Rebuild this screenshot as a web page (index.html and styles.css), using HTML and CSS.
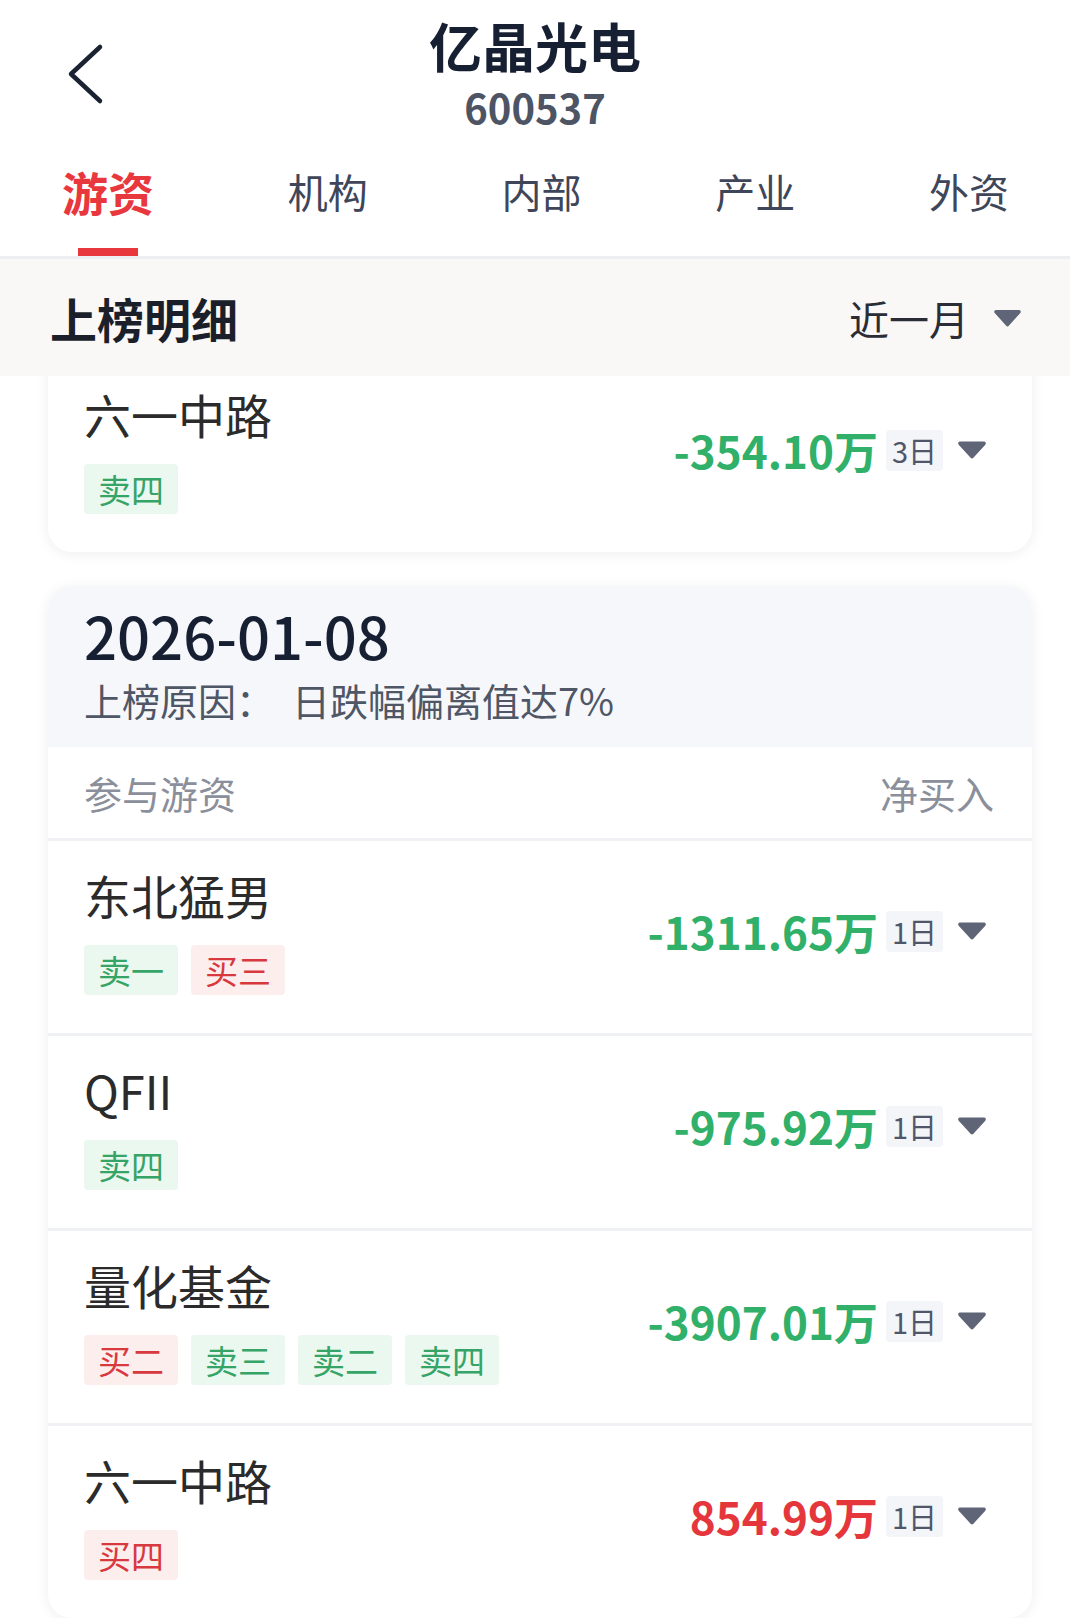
FILE: index.html
```html
<!DOCTYPE html>
<html lang="zh-CN">
<head>
  <meta charset="UTF-8">
  <meta name="viewport" content="width=device-width, initial-scale=1">
  <title>亿晶光电 - 龙虎榜</title>
  <link rel="stylesheet" href="styles.css">
</head>
<body>
  <header class="topbar">
    <a class="back" href="#">
      <svg width="40" height="62" viewBox="0 0 40 62"><path d="M35 4 L6 31 L35 58" fill="none" stroke="#1b2232" stroke-width="4.5" stroke-linecap="round" stroke-linejoin="round"/></svg>
    </a>
    <div class="heading">
      <div class="title">亿晶光电</div>
      <div class="code">600537</div>
    </div>
    <div></div>
  </header>

  <nav class="tabs">
    <div class="tab active"><span>游资</span><i></i></div>
    <div class="tab"><span>机构</span><i></i></div>
    <div class="tab"><span>内部</span><i></i></div>
    <div class="tab"><span>产业</span><i></i></div>
    <div class="tab"><span>外资</span><i></i></div>
  </nav>

  <div class="section-bar">
    <h2>上榜明细</h2>
    <div class="range">
      <span>近一月</span>
      <svg width="29" height="20" viewBox="0 0 29 20"><path d="M3 2h23c1.6 0 2.4 1.9 1.3 3L15.8 17.8c-.7.8-1.9.8-2.6 0L1.7 5C.6 3.9 1.4 2 3 2z" fill="#5f6577"/></svg>
    </div>
  </div>

  <div class="list">
    <div class="card cut">
      <div class="row">
        <div class="who">
          <div class="name">六一中路</div>
          <div class="tags"><span class="tag sell">卖四</span></div>
        </div>
        <div class="net">
          <span class="amt down">-354.10万</span>
          <span class="days">3日</span>
          <svg width="30" height="20" viewBox="0 0 30 20"><path d="M3 1.5h24c1.7 0 2.5 2 1.3 3.2L16.4 17.8c-.8.8-2 .8-2.8 0L1.7 4.7C.5 3.5 1.3 1.5 3 1.5z" fill="#5f6577"/></svg>
        </div>
      </div>
    </div>

    <div class="card">
      <div class="card-head">
        <div class="date">2026-01-08</div>
        <div class="reason">上榜原因：<span class="why">日跌幅偏离值达7%</span></div>
      </div>
      <div class="col-head"><span>参与游资</span><span>净买入</span></div>

      <div class="row">
        <div class="who">
          <div class="name">东北猛男</div>
          <div class="tags"><span class="tag sell">卖一</span><span class="tag buy">买三</span></div>
        </div>
        <div class="net">
          <span class="amt down">-1311.65万</span>
          <span class="days">1日</span>
          <svg width="30" height="20" viewBox="0 0 30 20"><path d="M3 1.5h24c1.7 0 2.5 2 1.3 3.2L16.4 17.8c-.8.8-2 .8-2.8 0L1.7 4.7C.5 3.5 1.3 1.5 3 1.5z" fill="#5f6577"/></svg>
        </div>
      </div>

      <div class="row">
        <div class="who">
          <div class="name">QFII</div>
          <div class="tags"><span class="tag sell">卖四</span></div>
        </div>
        <div class="net">
          <span class="amt down">-975.92万</span>
          <span class="days">1日</span>
          <svg width="30" height="20" viewBox="0 0 30 20"><path d="M3 1.5h24c1.7 0 2.5 2 1.3 3.2L16.4 17.8c-.8.8-2 .8-2.8 0L1.7 4.7C.5 3.5 1.3 1.5 3 1.5z" fill="#5f6577"/></svg>
        </div>
      </div>

      <div class="row">
        <div class="who">
          <div class="name">量化基金</div>
          <div class="tags"><span class="tag buy">买二</span><span class="tag sell">卖三</span><span class="tag sell">卖二</span><span class="tag sell">卖四</span></div>
        </div>
        <div class="net">
          <span class="amt down">-3907.01万</span>
          <span class="days">1日</span>
          <svg width="30" height="20" viewBox="0 0 30 20"><path d="M3 1.5h24c1.7 0 2.5 2 1.3 3.2L16.4 17.8c-.8.8-2 .8-2.8 0L1.7 4.7C.5 3.5 1.3 1.5 3 1.5z" fill="#5f6577"/></svg>
        </div>
      </div>

      <div class="row">
        <div class="who">
          <div class="name">六一中路</div>
          <div class="tags"><span class="tag buy">买四</span></div>
        </div>
        <div class="net">
          <span class="amt up">854.99万</span>
          <span class="days">1日</span>
          <svg width="30" height="20" viewBox="0 0 30 20"><path d="M3 1.5h24c1.7 0 2.5 2 1.3 3.2L16.4 17.8c-.8.8-2 .8-2.8 0L1.7 4.7C.5 3.5 1.3 1.5 3 1.5z" fill="#5f6577"/></svg>
        </div>
      </div>
    </div>
  </div>
</body>
</html>
```

FILE: styles.css
```css
body {
  margin: 0;
  background: #ffffff;
  font-family: "Noto Sans CJK SC", "Noto Sans", sans-serif;
  color: #222222;
}
.topbar {
  display: grid;
  grid-template-columns: 1fr auto 1fr;
  padding-top: 15px;
}
.back {
  display: block;
  padding: 28px 0 0 65px;
  line-height: 0;
}
.heading {
  text-align: center;
}
.title {
  font-size: 53px;
  font-weight: 700;
  line-height: 60px;
  color: #172033;
}
.code {
  font-size: 40px;
  font-weight: 600;
  line-height: 44px;
  margin-top: 10px;
  color: #4d5464;
}
.tabs {
  display: flex;
  justify-content: space-between;
  padding: 34px 61px 0 62px;
  border-bottom: 3px solid #eceef2;
}
.tab {
  display: flex;
  flex-direction: column;
  align-items: center;
  font-size: 40px;
  line-height: 56px;
  color: #40465a;
}
.tab i {
  display: block;
  width: 60px;
  height: 8px;
  margin-top: 29px;
}
.tab.active {
  font-size: 46px;
  font-weight: 700;
  color: #e8383d;
}
.tab.active i {
  background: #e8383d;
}
.section-bar {
  position: relative;
  z-index: 1;
  display: flex;
  align-items: center;
  justify-content: space-between;
  height: 117px;
  padding: 0 48px 0 50px;
  background: #f9f8f6;
}
.section-bar h2 {
  margin: 0;
  font-size: 47px;
  font-weight: 700;
  color: #1b1f2a;
}
.range {
  display: flex;
  align-items: center;
  gap: 24px;
  font-size: 40px;
  color: #2a2d36;
}
.list {
  padding: 0 38px 0 48px;
}
.card {
  margin-top: 34px;
  background: #ffffff;
  border-radius: 24px;
  box-shadow: 0 2px 14px rgba(20, 30, 60, 0.07);
  overflow: hidden;
}
.card.cut {
  margin-top: -16px;
  border-radius: 0 0 24px 24px;
}
.card-head {
  padding: 16px 36px 23px;
  background: #f5f7fb;
}
.date {
  font-size: 58px;
  font-weight: 500;
  line-height: 66px;
  color: #172033;
}
.reason {
  margin-top: 8px;
  font-size: 38px;
  line-height: 48px;
  color: #4f5666;
}
.why {
  margin-left: 18px;
}
.col-head {
  display: flex;
  align-items: center;
  justify-content: space-between;
  height: 91px;
  padding: 0 38px 0 36px;
  font-size: 38px;
  color: #8a8f9b;
  border-bottom: 3px solid #eff1f4;
}
.row {
  display: flex;
  align-items: center;
  justify-content: space-between;
  padding: 26px 45px 38px 36px;
  border-bottom: 3px solid #eff1f4;
}
.row:last-child {
  border-bottom: 0;
}
.name {
  font-size: 47px;
  line-height: 56px;
  color: #2b2b2b;
}
.tags {
  display: flex;
  gap: 13px;
  margin-top: 22px;
}
.tag {
  height: 50px;
  line-height: 50px;
  padding: 0 14px;
  font-size: 33px;
  border-radius: 4px;
}
.tag.sell {
  color: #36a467;
  background: #eaf8ef;
}
.tag.buy {
  color: #d8393e;
  background: #fdeeee;
}
.net {
  display: flex;
  align-items: center;
}
.amt {
  font-size: 44px;
  font-weight: 700;
  line-height: 52px;
}
.amt.down {
  color: #30b068;
}
.amt.up {
  color: #e5363c;
}
.days {
  margin-left: 8px;
  height: 41px;
  line-height: 41px;
  padding: 0 6px;
  font-size: 29px;
  color: #50566a;
  background: #f3f5f8;
  border-radius: 4px;
}
.net svg {
  margin-left: 14px;
}
```
